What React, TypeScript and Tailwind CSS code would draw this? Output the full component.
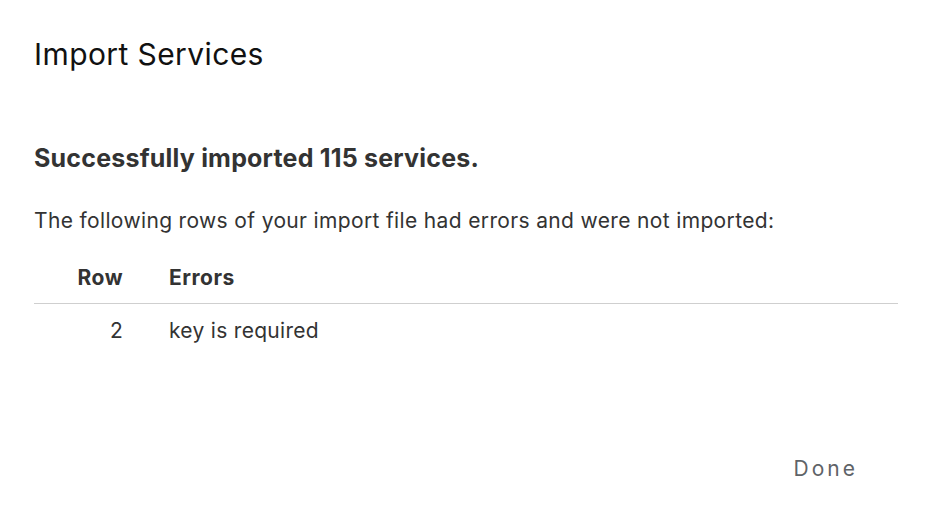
export default function App() {
  return (
    <div className="w-[938px] h-[532px] bg-white flex flex-col" style={{ fontFamily: "Inter, 'Noto Sans', sans-serif" }}>
      <div className="pl-[34px] pt-[36px] text-[30px] leading-[36px] tracking-[0.4px] text-[#111]">Import Services</div>
      <div className="pl-[34px] pr-[40px] pt-[71px] flex flex-col">
        <div className="text-[25px] leading-[30px] font-bold tracking-[0.2px] text-[#333]">Successfully imported 115 services.</div>
        <div className="mt-[34px] text-[21px] leading-[28px] tracking-[0.35px] text-[#333]">The following rows of your import file had errors and were not imported:</div>
        <div className="mt-[17px] flex flex-col">
          <div className="flex h-[52px] items-center border-b border-[#cfcfcf] text-[21px] font-bold tracking-[0.5px] text-[#333]">
            <div className="w-[89px] text-right">Row</div>
            <div className="ml-[46px]">Errors</div>
          </div>
          <div className="flex h-[54px] items-center text-[21px] tracking-[0.3px] text-[#333]">
            <div className="w-[89px] text-right">2</div>
            <div className="ml-[46px]">key is required</div>
          </div>
        </div>
      </div>
      <div className="flex-1" />
      <div className="flex justify-end pr-[80px] pb-[48px]">
        <div className="text-[21px] tracking-[3px] text-[#5f6368]">Done</div>
      </div>
    </div>
  );
}
